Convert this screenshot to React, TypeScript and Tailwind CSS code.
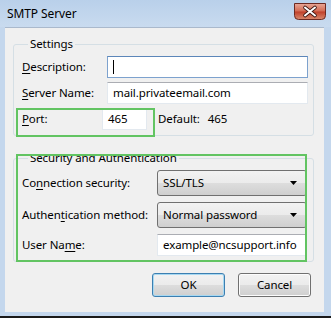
import React from "react";

const font = "font-['Noto_Sans','Open_Sans',sans-serif]";

function U({ children }: { children: React.ReactNode }) {
  return <span className="underline underline-offset-2">{children}</span>;
}

function TextBox({ value, className = "", focused = false }: { value?: string; className?: string; focused?: boolean }) {
  return (
    <div
      className={`h-[22px] bg-white border flex items-center pl-[5px] whitespace-nowrap overflow-hidden ${
        focused ? "border-[#7da2ce] border-t-[#5c86b9]" : "border-[#e3e9ef] border-t-[#abadb3]"
      } ${className}`}
    >
      {focused && <span className="w-px h-[14px] bg-black" />}
      {value}
    </div>
  );
}

function Combo({ value, className = "" }: { value: string; className?: string }) {
  return (
    <div
      className={`h-[26px] rounded-[3px] border border-[#707070] bg-[linear-gradient(#f2f2f2_0%,#ebebeb_50%,#dddddd_50%,#cfcfcf_100%)] flex items-center pl-[5px] pr-[9px] ${className}`}
    >
      <span>{value}</span>
      <svg className="ml-auto" width="7" height="4" viewBox="0 0 7 4">
        <path d="M0 0h7L3.5 4z" fill="#000" />
      </svg>
    </div>
  );
}

function Button({ label, primary = false }: { label: string; primary?: boolean }) {
  return (
    <button
      className={`w-[73px] h-[24px] rounded-[3px] border bg-[linear-gradient(#f2f2f2_0%,#ebebeb_50%,#dddddd_50%,#cfcfcf_100%)] ${
        primary ? "border-[#3c7fb1] shadow-[inset_0_0_0_1px_#a7d8f1]" : "border-[#707070] shadow-[inset_0_0_0_1px_#fcfcfc]"
      }`}
    >
      {label}
    </button>
  );
}

function CloseButton() {
  return (
    <svg className="ml-auto mb-[5px]" width="32" height="17" viewBox="0 0 32 17">
      <defs>
        <linearGradient id="cb" x1="0" y1="0" x2="0" y2="1">
          <stop offset="0" stopColor="#e9a898" />
          <stop offset="0.48" stopColor="#d36a52" />
          <stop offset="0.52" stopColor="#c0402a" />
          <stop offset="1" stopColor="#d98a6e" />
        </linearGradient>
      </defs>
      <path d="M0.5 0.5h31v12a4 4 0 0 1-4 4h-23a4 4 0 0 1-4-4z" fill="url(#cb)" stroke="#6d2a22" />
      <path d="M11 4.5l10 8M21 4.5l-10 8" stroke="#3a1510" strokeWidth="3.6" strokeLinecap="round" />
      <path d="M11 4.5l10 8M21 4.5l-10 8" stroke="#fff" strokeWidth="2" strokeLinecap="round" />
    </svg>
  );
}

export default function App() {
  return (
    <div className={`w-[331px] h-[318px] bg-[#c4d7ed] flex flex-col ${font} text-[11.5px] tracking-[-0.1px] text-black overflow-hidden`}>
      {/* Title bar */}
      <div className="h-[27px] flex items-center pl-[7px] pr-[5px] bg-[linear-gradient(#b9d0ea,#c9dbef)]">
        <span className="text-[12px]">SMTP Server</span>
        <CloseButton />
      </div>

      {/* Client area */}
      <div className="relative ml-[5px] mr-[7px] h-[285px] bg-[#f0f0f0] border-t border-[#aab9cc] pl-[8px] pr-[10px]">
        <fieldset className="mt-[8px] border border-[#d5dfe5] rounded-[3px] pl-[8px] pr-[5px] pb-[5px]">
          <legend className="ml-[6px] px-[2px] leading-[16px]">Settings</legend>
          <div className="flex flex-col gap-[4px] pt-[4px]">
            <div className="flex items-center">
              <span className="w-[85px]"><U>D</U>escription:</span>
              <TextBox focused className="flex-1" />
            </div>
            <div className="flex items-center">
              <span className="w-[85px]"><U>S</U>erver Name:</span>
              <TextBox value="mail.privateemail.com" className="flex-1" />
            </div>
            <div className="flex items-center">
              <span className="w-[80px]"><U>P</U>ort:</span>
              <TextBox value="465" className="w-[45px]" />
              <span className="ml-[11px]">Default:</span>
              <span className="ml-[8px]">465</span>
            </div>
          </div>
        </fieldset>

        <fieldset className="mt-[14px] border border-[#d5dfe5] rounded-[3px] pl-[8px] pr-[6px] pb-[5px]">
          <legend className="ml-[6px] px-[2px] leading-[16px]">Security and Authentication</legend>
          <div className="flex flex-col gap-[6px] pt-[4px]">
            <div className="flex items-center">
              <span className="w-[135px]">Co<U>n</U>nection security:</span>
              <Combo value="SSL/TLS" className="flex-1" />
            </div>
            <div className="flex items-center">
              <span className="w-[135px]">Authen<U>t</U>ication method:</span>
              <Combo value="Normal password" className="flex-1" />
            </div>
            <div className="flex items-center">
              <span className="w-[135px]">User Na<U>m</U>e:</span>
              <TextBox value="example@ncsupport.info" className="flex-1" />
            </div>
          </div>
        </fieldset>

        <div className="flex justify-end gap-[13px] mt-[11px] pr-[3px]">
          <Button label="OK" primary />
          <Button label="Cancel" />
        </div>

        {/* Annotation highlights */}
        <div className="absolute left-[11px] top-[80px] w-[139px] h-[29px] border-2 border-[#62c462] pointer-events-none" />
        <div className="absolute left-[11px] top-[126px] w-[291px] h-[108px] border-2 border-[#62c462] pointer-events-none" />
      </div>

      {/* Bottom frame */}
      <div className="flex-1 border-b-2 border-[#1a1a1a]" />
    </div>
  );
}
